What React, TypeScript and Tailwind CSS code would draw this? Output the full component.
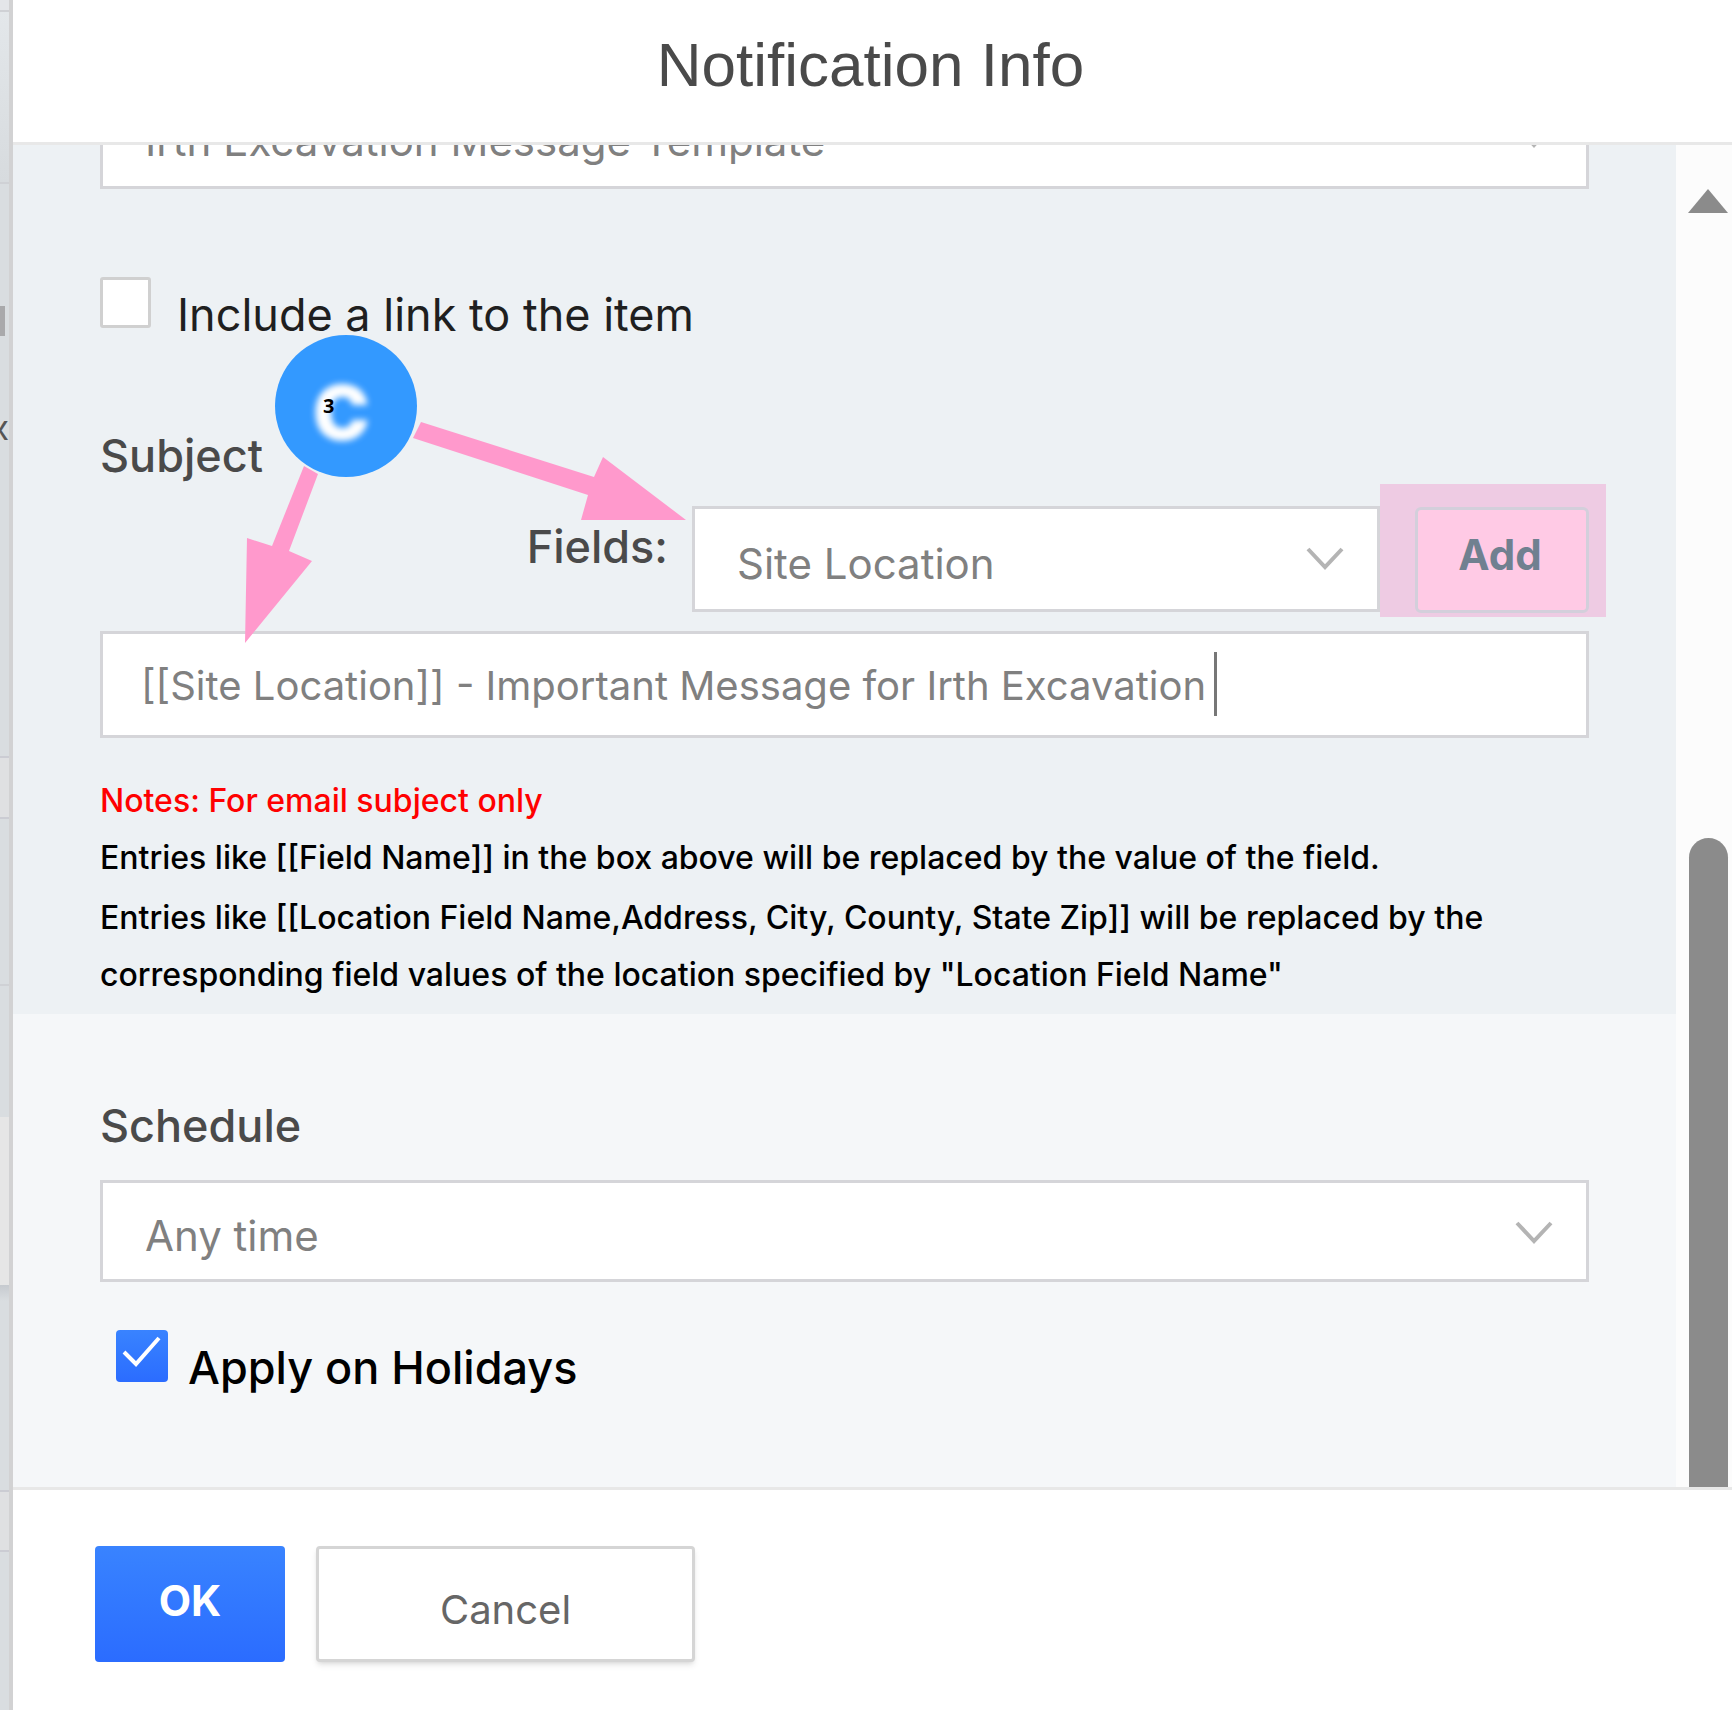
import type { ReactNode } from "react";

function Chevron({ className }: { className: string }) {
  return (
    <svg
      viewBox="0 0 40 26"
      className={`pointer-events-none absolute h-[26px] w-10 ${className}`}
      fill="none"
      stroke="#b4b4b4"
      strokeWidth="4"
      aria-hidden="true"
    >
      <path d="M3 3 L20 21 L37 3" />
    </svg>
  );
}

function SelectBox({
  id,
  label,
  value,
  className,
}: {
  id: string;
  label?: string;
  value: string;
  className: string;
}) {
  return (
    <div className="relative w-full">
      <select
        id={id}
        aria-label={label}
        defaultValue={value}
        className={`block w-full appearance-none border-[3px] border-[#d5d5d9] bg-white pt-2 pr-24 pl-[42px] text-[42px] text-[#808080] outline-none ${className}`}
      >
        <option>{value}</option>
      </select>
      <Chevron className="top-[40px] right-[35px]" />
    </div>
  );
}

function FieldLabel({ htmlFor, children }: { htmlFor: string; children: ReactNode }) {
  return (
    <label htmlFor={htmlFor} className="block text-[45px] leading-[48px] font-medium text-[#4a4a4a]">
      {children}
    </label>
  );
}

function PageEdge() {
  return (
    <div
      aria-hidden="true"
      className="relative w-[13px] shrink-0 overflow-hidden border-r-4 border-[#d2d2d3] bg-[#d9dde0]"
    >
      <div className="h-3 border-b-2 border-[#cfd1d5] bg-[#e4e6e9]" />
      <div className="h-[172px] border-b-2 border-[#cfd1d5] bg-linear-to-b from-[#e3e7ea] to-[#d7dbde]" />
      <div className="mt-[122px] h-[30px] w-[5px] bg-[#a9a9ab]" />
      <div className="mt-[82px] h-6 text-right text-[34px] leading-5 text-[#555]">
        <span className="float-right">x</span>
      </div>
      <div className="mt-[314px] h-[63px] border-y-2 border-[#cbccd3] bg-[#dfe0e2]" />
      <div className="h-[167px] border-b-2 border-[#cfd1d5]" />
      <div className="mt-[131px] h-[168px] bg-[#e6e6e6]" />
      <div className="h-4 bg-linear-to-b from-[#c6cacf] to-[#d9dde0]" />
      <div className="mt-[189px] h-[62px] border-y-2 border-[#cbccd3] bg-[#dfe0e2]" />
    </div>
  );
}

function Annotations() {
  return (
    <div aria-hidden="true" className="pointer-events-none absolute top-[334px] left-[245px] h-[312px] w-[442px]">
      <svg viewBox="245 334 442 312" className="h-full w-full">
        <g fill="#ff99cc">
          <path d="M421 422 L594 477 L603 457 L686 520 L581 520 L588 495 L413 438 Z" />
          <path d="M304 466 L272 546 L247 538 L245 643 L312 561 L289 551 L318 474 Z" />
        </g>
        <circle cx="346" cy="406" r="71" fill="#3399ff" />
      </svg>
      <span className="absolute top-[38px] left-[68px] text-[76px] leading-[80px] font-black text-white blur-[3px]">
        C
      </span>
      <span className="absolute top-[60px] left-[78px] text-[20px] leading-6 font-bold text-black [font-family:'Noto_Sans',sans-serif]">
        3
      </span>
    </div>
  );
}

export default function App() {
  return (
    <div className="relative flex min-h-screen overflow-hidden bg-white [font-family:Inter,sans-serif]">
      <PageEdge />
      <div role="dialog" aria-labelledby="title" className="flex min-w-0 flex-1 flex-col">
        <header className="border-b-[3px] border-[#e8e8e8] bg-white pt-[25px] pb-[37px] text-center">
          <h1
            id="title"
            className="pr-1 text-[62px] leading-[80px] text-[#4a4a4a] [font-family:'Liberation_Sans',sans-serif]"
          >
            Notification Info
          </h1>
        </header>

        <div className="flex">
          <div className="min-w-0 flex-1 overflow-hidden">
            <section className="flow-root bg-[#edf1f4] px-[87px] pb-[11px]">
              <div className="-mt-[61px]">
                <SelectBox
                  id="template"
                  label="Message template"
                  value="Irth Excavation Message Template"
                  className="h-[105px]"
                />
              </div>

              <div className="mt-[88px] flex items-start gap-[26px]">
                <input
                  id="link"
                  type="checkbox"
                  className="size-[51px] shrink-0 appearance-none rounded-[3px] border-[3px] border-[#d0d0d0] bg-white"
                />
                <label htmlFor="link" className="pt-3 text-[45px] leading-[51px] text-[#1f1f1f]">
                  Include a link to the item
                </label>
              </div>

              <div className="mt-[92px]">
                <FieldLabel htmlFor="subject">Subject</FieldLabel>
              </div>

              <div className="mt-[26px] flex items-start justify-end">
                <div className="pt-[17px] pr-6">
                  <FieldLabel htmlFor="fields">Fields:</FieldLabel>
                </div>
                <div className="w-[688px]">
                  <SelectBox id="fields" value="Site Location" className="h-[106px]" />
                </div>
                <div className="-mt-[22px] -mr-[17px] -mb-1 bg-[#eecbe3] pt-[23px] pr-[17px] pb-1 pl-[35px]">
                  <button
                    type="button"
                    className="block h-[106px] w-[174px] rounded-md border-[3px] border-[#d3cfdb] bg-[#ffcae5] pr-1 pb-3 text-[42px] font-bold text-[#708090]"
                  >
                    Add
                  </button>
                </div>
              </div>

              <div className="relative mt-[18px]">
                <input
                  id="subject"
                  type="text"
                  defaultValue="[[Site Location]] - Important Message for Irth Excavation"
                  className="block h-[107px] w-full border-[3px] border-[#d5d5d9] bg-white pt-[2px] pr-9 pl-[38px] text-[40px] text-[#808080] outline-none"
                />
                <span aria-hidden="true" className="absolute top-[21px] left-[1114px] h-[64px] w-[3px] bg-[#777]" />
              </div>

              <div className="mt-[34px] text-[32px] leading-[57px] font-medium text-black">
                <p className="text-[#ff0000]">Notes: For email subject only</p>
                <p>Entries like [[Field Name]] in the box above will be replaced by the value of the field.</p>
                <p className="pt-[3px]">
                  Entries like [[Location Field Name,Address, City, County, State Zip]] will be replaced by the
                  corresponding field values of the location specified by "Location Field Name"
                </p>
              </div>
            </section>

            <section className="bg-[#f5f7f9] px-[87px] pt-[88px] pb-[93px]">
              <FieldLabel htmlFor="schedule">Schedule</FieldLabel>
              <div className="mt-[30px]">
                <SelectBox id="schedule" value="Any time" className="h-[102px]" />
              </div>
              <div className="mt-12 ml-[16px] flex items-start gap-5">
                <span className="relative block size-[52px] shrink-0">
                  <input
                    id="holidays"
                    type="checkbox"
                    defaultChecked
                    className="block size-[52px] appearance-none rounded-[4px] bg-linear-to-b from-[#3983ff] to-[#2b6cff]"
                  />
                  <svg
                    viewBox="0 0 52 52"
                    className="pointer-events-none absolute inset-0"
                    fill="none"
                    stroke="#fff"
                    strokeWidth="4"
                    aria-hidden="true"
                  >
                    <path d="M8 22 L20 34 L43 8" />
                  </svg>
                </span>
                <label htmlFor="holidays" className="pt-3 text-[45px] leading-[52px] font-medium text-black">
                  Apply on Holidays
                </label>
              </div>
            </section>
          </div>

          <div aria-hidden="true" className="flex w-14 shrink-0 flex-col items-center bg-[#fcfcfc] pl-2">
            <svg viewBox="0 0 40 24" className="mt-[44px] h-6 w-10" fill="#8b8b8b">
              <path d="M20 0 L40 24 H0 Z" />
            </svg>
            <div className="mt-[625px] w-[39px] flex-1 rounded-t-full bg-[#8b8b8b]" />
          </div>
        </div>

        <footer className="flex flex-1 items-start gap-[31px] border-t-[3px] border-[#e8e8e8] bg-white px-[82px] pt-[56px] pb-12">
          <button
            type="button"
            className="h-[116px] w-[190px] rounded-[4px] bg-linear-to-b from-[#3983ff] to-[#2b6cff] pb-2 text-[42px] font-bold text-white"
          >
            OK
          </button>
          <button
            type="button"
            className="h-[116px] w-[379px] rounded-[4px] border-[3px] border-[#d5d5d5] bg-white pt-3 text-[40px] text-[#666] shadow-md"
          >
            Cancel
          </button>
        </footer>
      </div>
      <Annotations />
    </div>
  );
}
